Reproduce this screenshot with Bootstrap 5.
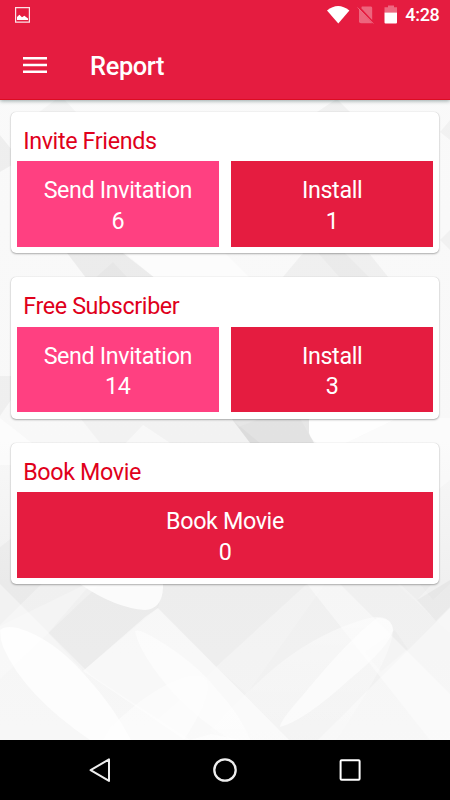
<!DOCTYPE html>
<html lang="en">
<head>
<meta charset="utf-8">
<meta name="viewport" content="width=device-width, initial-scale=1">
<title>Report</title>
<link href="https://cdn.jsdelivr.net/npm/bootstrap@5.3.0/dist/css/bootstrap.min.css" rel="stylesheet">
<style>
  body { font-family: Roboto, "Liberation Sans", sans-serif; background: #f7f7f7; overflow: hidden; }
  .screen { height: 800px; }
  .top { background: #e51c40; height: 100px; border-bottom: 1px solid #dc0c22; box-shadow: 0 1px 4px rgba(0,40,40,.4); z-index: 2; }
  .status { height: 30px; padding: 0 10.5px 0 15px; }
  .clock { font-size: 18px; font-weight: 500; letter-spacing: -.3px; line-height: 30px; margin-left: -2px; }
  .appbar { height: 70px; padding-left: 23px; }
  .menu-icon { margin-top: -1px; }
  .app-title { font-size: 25.4px; letter-spacing: -.35px; font-weight: 500; line-height: 30px; margin-left: 43px; padding-top: 1px; }
  .content { padding: 11.8px 11px 0; gap: 24px; }
  .backdrop { z-index: 0; left: 0; top: 0; }
  .panel { height: 141.4px; padding: 0 6px; border: 0; border-radius: 5px; box-shadow: 0 1px 2px rgba(0,0,0,.3), 0 0 1px rgba(0,0,0,.2); z-index: 1; }
  .panel-title { height: 49.6px; padding: 14.3px 0 0 6.2px; font-size: 23.3px; letter-spacing: -.36px; line-height: 30px; color: #e0001b; font-weight: 400; }
  .tiles { gap: 12.6px; }
  .tile { flex: 1 1 0; height: 85.4px; padding-top: 13.8px; font-size: 23.3px; letter-spacing: -.36px; line-height: 30.6px; color: #fff; background: #e51c40; }
  .tile-pink { background: #ff4081; }
  .softkeys { height: 60px; background: #000; padding: 0 37px; z-index: 2; }
</style>
<script src="https://cdn.jsdelivr.net/npm/bootstrap@5.3.0/dist/js/bootstrap.bundle.min.js"></script>
</head>
<body>
<div class="screen d-flex flex-column position-relative">
  <svg class="backdrop position-absolute" width="450" height="800" viewBox="0 0 450 800" aria-hidden="true">
    <defs>
      <linearGradient id="fade" x1="0" y1="0" x2="0" y2="1">
        <stop offset="0" stop-color="#fafafa"/><stop offset=".55" stop-color="#f8f8f8"/><stop offset=".73" stop-color="#f0f0f0"/><stop offset="1" stop-color="#f3f3f3"/>
      </linearGradient>
      <linearGradient id="leaf" x1="0" y1="0" x2="0" y2="1">
        <stop offset="0" stop-color="#fff" stop-opacity=".85"/><stop offset="1" stop-color="#fff" stop-opacity=".25"/>
      </linearGradient>
    </defs>
    <rect width="450" height="800" fill="url(#fade)"/>
    <g fill="#000">
      <path d="M55 100L39 112H76L65 100Z" opacity=".025"/>
      <path d="M335 100L317 112H350L338 100Z" opacity=".035"/>
      <path d="M0 135L12 150V165L0 172Z" opacity=".045"/>
      <path d="M440 132L450 120V140Z" opacity=".03"/>
      <path d="M440 240L450 230V250Z" opacity=".03"/>
      <path d="M67 253H123L155 278H86Z" opacity=".05"/>
      <path d="M95 278L113 262L128 278Z" opacity=".02"/>
      <path d="M303 253H369L389 278H282Z" opacity=".035"/>
      <path d="M318 253H345L370 278H340Z" opacity=".02"/>
      <path d="M0 376H11V400L0 416Z" opacity=".035"/>
      <path d="M80 418H230L260 443H170L143 425L126 443H100Z" opacity=".025"/>
      <path d="M231 418H309V432L314 443H250Z" opacity=".07"/>
      <path d="M261 418L238 427L250 443H314L300 418Z" opacity=".015"/>
      <path d="M0 547L60 500V566L0 625Z" opacity=".025"/>
      <path d="M87 588L163 588L158 608L83 671L48 633Z" opacity=".018"/>
      <path d="M157 608L163 584H307L216 667Z" opacity=".012"/>
      <path d="M400 584H432L417 600Z" opacity=".02"/>
      <path d="M450 580L417 600L436 621L450 607Z" opacity=".035"/>
      <path d="M395 630L408 649L381 672L364 652Z" opacity=".015"/>
    </g>
    <g fill="#fff">
      <path d="M0 418L60 465H0ZM125 253L155 278H250L225 253Z" opacity=".5"/>
      <path d="M309 418L309 433Q311 440 317 443H346L398 418Z" opacity=".85"/>
      <path d="M346 443L398 418H450V480L400 520Z" opacity=".4"/>
      <path d="M0 584L92 676L190 740H0Z" opacity=".38"/>
      <path d="M0 626L86 584H100L0 679Z" opacity=".25"/>
      <path d="M145 617L158 608L289 740H185L83 671Z" opacity=".48"/>
      <path d="M307 584H340L450 694V740H430Z" opacity=".42"/>
      <path d="M216 667L307 584H325L247 694Z" opacity=".15"/>
      <path d="M450 608L318 740H450Z" opacity=".4"/>
      <path d="M397 584L450 633V584L433 600L420 584Z" opacity=".15"/>
      <path d="M205 678L134 740H289L217 667Z" opacity=".2"/>
      <path d="M80 584Q115 608 145 610Q162 609 163 588V584Z" opacity=".8"/>
      <path d="M0 630Q5 625 18 628Q52 638 84 674Q114 707 131 740H90Q24 695 3 647Q0 639 0 630Z" opacity=".78"/>
      <path d="M135 631Q139 628 158 640Q196 663 217 690Q241 716 250 740H231Q190 714 164 682Q139 651 135 631Z" opacity=".55"/>
      <path d="M110 728Q152 686 189 676Q208 673 208 688Q206 706 184 740H103Z" opacity=".48"/>
    </g>
    <path d="M393 630Q390 612 365 619Q321 632 283 661Q257 681 210 730L220 740H336Q392 658 393 630Z" fill="url(#leaf)" opacity=".55"/>
    <path d="M377 618Q392 617 393 630Q390 646 350 679Q304 721 280 727Q279 722 303 695Q349 639 377 618Z" fill="#fff" opacity=".6"/>
    <path d="M211 734L241 740H190Z" fill="#fff" opacity=".5"/>
  </svg>

  <header class="top text-white position-relative flex-shrink-0">
    <div class="status d-flex align-items-center">
      <svg class="me-auto" width="15" height="16" viewBox="0 0 15 16" aria-hidden="true">
        <path d="M.6.7H14.4V15.1H.6Z" fill="none" stroke="#fff" stroke-opacity=".88" stroke-width="1.2"/>
        <path d="M2 13V10L4.4 7.8L7 10.3L9.4 8.8L11 10L13 11.4V13Z" fill="#fff"/>
      </svg>
      <svg width="80" height="20" viewBox="0 0 80 20" aria-hidden="true">
        <path d="M0 5.5Q11 -3.5 22.4 5.5L11.3 18.4Z" fill="#fff"/>
        <g fill="#fff" opacity=".32">
          <path d="M34.8 1.5H44Q45.2 1.5 45.2 3V15L34.3 3.2Z"/>
          <path d="M32 4L45.5 18.2H34Q32 18.2 32 16.4Z"/>
        </g>
        <path d="M30.5 2.5L46.4 18.5" stroke="#fff" stroke-opacity=".28" stroke-width="1"/>
        <path d="M57.5 7.5V2.3H61V.5H67V2.3H70V7.5Z" fill="#fff" opacity=".34"/>
        <path d="M57.5 7.5H70V17.5Q70 18.5 69 18.5H58.5Q57.5 18.5 57.5 17.5Z" fill="#fff"/>
      </svg>
      <span class="clock">4:28</span>
    </div>
    <div class="appbar d-flex align-items-center">
      <svg class="menu-icon" width="24" height="18" viewBox="0 0 24 18" aria-hidden="true"><path d="M0 2.2H24M0 9H24M0 15.8H24" stroke="#fff" stroke-width="2.5"/></svg>
      <h1 class="app-title mb-0">Report</h1>
    </div>
  </header>

  <main class="content d-flex flex-column flex-grow-1">
    <section class="card panel">
      <h2 class="panel-title mb-0">Invite Friends</h2>
      <div class="tiles d-flex text-center">
        <div class="tile tile-pink"><div>Send Invitation</div><div>6</div></div>
        <div class="tile"><div>Install</div><div>1</div></div>
      </div>
    </section>
    <section class="card panel">
      <h2 class="panel-title mb-0">Free Subscriber</h2>
      <div class="tiles d-flex text-center">
        <div class="tile tile-pink"><div>Send Invitation</div><div>14</div></div>
        <div class="tile"><div>Install</div><div>3</div></div>
      </div>
    </section>
    <section class="card panel">
      <h2 class="panel-title mb-0">Book Movie</h2>
      <div class="tiles d-flex text-center">
        <div class="tile"><div>Book Movie</div><div>0</div></div>
      </div>
    </section>
  </main>

  <nav class="softkeys d-flex justify-content-around align-items-center position-relative flex-shrink-0" aria-label="System">
    <svg width="26" height="26" viewBox="0 0 26 26" fill="none" stroke="#eee" stroke-width="2" stroke-linejoin="round"><path d="M22 2.4V23.9L3.6 13.1Z"/></svg>
    <svg width="26" height="26" viewBox="0 0 26 26" fill="none" stroke="#eee" stroke-width="2.3"><circle cx="13" cy="13" r="10.7"/></svg>
    <svg width="26" height="26" viewBox="0 0 26 26" fill="none" stroke="#fff" stroke-width="2"><rect x="3.6" y="3.3" width="19" height="19.4" rx="1"/></svg>
  </nav>
</div>
</body>
</html>
